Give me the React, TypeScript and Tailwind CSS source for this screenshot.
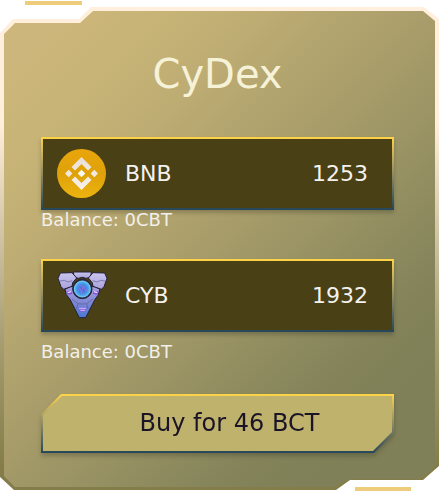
import React, { useId, useState } from "react";

function BnbIcon() {
  return (
    <svg viewBox="0 0 49 49" className="size-[49px] shrink-0" aria-hidden="true">
      <defs>
        <linearGradient id="coin" x1="0" y1="0" x2="0" y2="1">
          <stop offset="0" stopColor="#e9a60c" />
          <stop offset="0.5" stopColor="#dfa109" />
          <stop offset="1" stopColor="#ecb40f" />
        </linearGradient>
        <linearGradient id="mark" x1="0" y1="8" x2="0" y2="41" gradientUnits="userSpaceOnUse">
          <stop offset="0" stopColor="#eadfd6" />
          <stop offset="1" stopColor="#f7f1ea" />
        </linearGradient>
      </defs>
      <circle cx="24.5" cy="24.5" r="24.5" fill="url(#coin)" />
      <g fill="url(#mark)">
        <path d="M24.5 8 34.5 18 31 21.4 24.5 14.9 18 21.4 14.5 18Z" />
        <path d="M24.5 41 34.5 31 31 27.6 24.5 34.1 18 27.6 14.5 31Z" />
        <path d="M11.7 20.8 15.4 24.5 11.7 28.2 8 24.5Z" />
        <path d="M37.3 20.8 41 24.5 37.3 28.2 33.6 24.5Z" />
      </g>
      <path d="M24.5 20.7 28.3 24.5 24.5 28.3 20.7 24.5Z" fill="#fbf8f4" />
    </svg>
  );
}

function CybIcon() {
  return (
    <svg viewBox="21 23 153 147" className="h-[49px] w-[51px] shrink-0" aria-hidden="true">
      <defs>
        <linearGradient id="body" x1="0" y1="0" x2="0" y2="1">
          <stop offset="0" stopColor="#aaa0e2" />
          <stop offset="0.5" stopColor="#7f88d4" />
          <stop offset="1" stopColor="#4a78d4" />
        </linearGradient>
        <linearGradient id="plate" x1="0" y1="0" x2="0" y2="1">
          <stop offset="0" stopColor="#c9c5ee" />
          <stop offset="1" stopColor="#a9a2dc" />
        </linearGradient>
        <radialGradient id="core">
          <stop offset="0" stopColor="#4b62d8" />
          <stop offset="0.6" stopColor="#3f8fe6" />
          <stop offset="1" stopColor="#5cc0f2" />
        </radialGradient>
      </defs>
      <g stroke="#23213a" strokeWidth="3" strokeLinejoin="round">
        <path d="M45 78 60 70 135 70 150 78 144 96 135 108 107 163 88 163 60 108 49 94Z" fill="url(#body)" />
        <path d="M70 26H124L122 42 108 45Q97 39 86 45L72 42Z" fill="url(#plate)" />
        <path d="M31 29 66 28 80 44 68 58 66 69 41 78 33 70 24 45Z" fill="url(#plate)" />
        <path d="M164 29 129 28 115 44 127 58 129 69 154 78 162 70 171 45Z" fill="url(#plate)" />
        <circle cx="97" cy="77" r="29" fill="#2c2d48" />
      </g>
      <path
        d="M26 54 43 51 54 56 67 52M169 54 152 51 141 56 128 52M66 107 84 121 97 122 110 121 129 107M84 121 80 137M110 121 114 137"
        fill="none"
        stroke="#5f5d91"
        strokeWidth="2"
      />
      <circle cx="97" cy="77" r="24" fill="url(#core)" stroke="#74cdf5" strokeWidth="3" />
      <path
        d="M84 69Q90 62 96 69T108 67M83 81 90 75 94 86 99 71 106 80M88 91 97 88 104 93M110 77 107 86"
        fill="none"
        stroke="#8d74e4"
        strokeWidth="3"
      />
      <path d="M49 84 66 83 66 92 53 94ZM146 84 129 83 129 92 142 94Z" fill="#8150dc" />
      <path d="M53 88 64 85M142 88 131 85" stroke="#f4dcff" strokeWidth="4" />
      <path d="M85 132H110L106 146H90Z" fill="#7966dc" />
      <path d="M87 135H108M91 141H105" stroke="#d9bcfa" strokeWidth="3" />
    </svg>
  );
}

type TokenFieldProps = {
  symbol: string;
  initial: string;
  icon: React.ReactNode;
};

function TokenField({ symbol, initial, icon }: TokenFieldProps) {
  const id = useId();
  const [amount, setAmount] = useState(initial);
  return (
    <div className="bg-linear-to-b from-[#ffd447] to-[#25465a] p-0.5 shadow-[0_3px_4px_rgba(0,0,0,0.2)]">
      <div className="flex h-[69px] items-center bg-[#494016] pr-6 pl-3.5">
        <div className="flex w-[68px] shrink-0">{icon}</div>
        <label htmlFor={id} className="text-[22px] leading-7 text-[#f4f2ee]">
          {symbol}
        </label>
        <input
          id={id}
          type="text"
          inputMode="decimal"
          value={amount}
          onChange={(e) => setAmount(e.target.value)}
          className="min-w-0 flex-1 bg-transparent text-right text-[22px] leading-7 text-[#f4f2ee] outline-none"
        />
      </div>
    </div>
  );
}

export default function App() {
  return (
    <main className="relative bg-white font-['DejaVu_Sans','Noto_Sans',sans-serif]">
      <div className="absolute top-px left-[25px] h-1 w-[57px] bg-[#edcd7c]" />
      <div className="bg-linear-to-b from-[#ffefdc] from-25% via-[#a59c70] via-70% to-[#857d49] to-95% [clip-path:polygon(0_33px,13px_19px,79px_19px,91px_7px,calc(100%-15px)_7px,100%_19px,100%_calc(100%-25px),calc(100%-16px)_calc(100%-11px),calc(100%-89px)_calc(100%-11px),calc(100%-103px)_calc(100%-1px),14px_calc(100%-1px),0_calc(100%-14px))]">
        <div className="bg-[linear-gradient(135deg,#cdb67b_8%,#c8b476_18%,#bdac73_30%,#a69b69_50%,#959062_63%,#84835a_76%,#7f8058_86%)] pt-[50px] pr-[45px] pb-[38px] pl-[41px] [clip-path:polygon(4px_34px,15px_23px,80px_23px,93px_11px,calc(100%-16px)_11px,calc(100%-4px)_21px,calc(100%-4px)_calc(100%-25px),calc(100%-18px)_calc(100%-12px),calc(100%-90px)_calc(100%-12px),calc(100%-105px)_calc(100%-4px),15px_calc(100%-4px),4px_calc(100%-15px))]">
          <h1 className="text-center text-[40px] leading-[48px] text-[#f6f2d8]">CyDex</h1>
          <div className="mt-[39px]">
            <TokenField symbol="BNB" initial="1253" icon={<BnbIcon />} />
            <p className="text-lg leading-5 text-[#f2f0ea]">Balance: 0CBT</p>
          </div>
          <div className="mt-[29px]">
            <TokenField symbol="CYB" initial="1932" icon={<CybIcon />} />
            <p className="mt-2.5 text-lg leading-5 text-[#f2f0ea]">Balance: 0CBT</p>
          </div>
          <div className="mt-8 drop-shadow-[0_3px_2px_rgba(0,0,0,0.2)]">
            <button
              type="button"
              className="block w-full cursor-pointer bg-linear-to-b from-[#ffd447] to-[#25465a] text-[#1a1426] [clip-path:polygon(20px_0,100%_0,100%_calc(100%-20px),calc(100%-20px)_100%,0_100%,0_20px)]"
            >
              <span className="block bg-[#bfb26c] bg-clip-content p-0.5 [clip-path:polygon(21px_2px,calc(100%-2px)_2px,calc(100%-2px)_calc(100%-21px),calc(100%-21px)_calc(100%-2px),2px_calc(100%-2px),2px_21px)]">
                <span className="block py-3 pl-6 text-2xl leading-[31px]">Buy for 46 BCT</span>
              </span>
            </button>
          </div>
        </div>
      </div>
      <div className="absolute right-7 bottom-0 h-1 w-14 bg-[#edcd7c]" />
    </main>
  );
}
